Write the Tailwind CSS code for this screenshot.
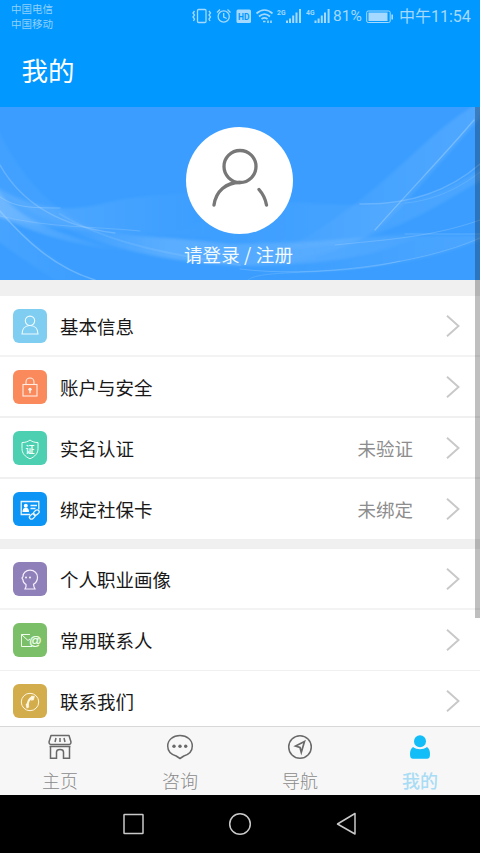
<!DOCTYPE html>
<html lang="zh-CN">
<head>
<meta charset="utf-8">
<title>我的</title>
<script src="https://cdn.jsdelivr.net/npm/@tailwindcss/browser@4"></script>
</head>
<body class="w-[480px] h-[853px] overflow-hidden bg-black font-['Noto_Sans_CJK_SC','Noto_Sans',sans-serif]">
<div class="relative flex flex-col w-[480px] h-[853px] overflow-hidden">
  <header class="h-[107px] shrink-0 bg-[#0198ff]">
    <div class="flex justify-between h-[33px] text-[#a5d9ff]">
      <div class="pl-[11px] pt-[2px] text-[10.5px] leading-[14.5px] text-[#8fd0ff]"><div>中国电信</div><div>中国移动</div></div>
      <div class="flex items-center h-[33px] pr-[10px]">
        <svg class="shrink-0 w-[142px] h-[33px]" viewBox="190 0 142 33" fill="none" stroke="#a5d9ff" stroke-width="1.3">
          <rect x="197.500" y="9.500" width="8.500" height="13" rx="1"/>
          <path d="M194.500 11l-1.500 2 1.500 2-1.500 2 1.500 2-1 2M209 11l1.500 2-1.500 2 1.500 2-1.500 2 1 2"/>
          <circle cx="223.700" cy="16.500" r="5.600"/><path d="M223.700 13v4l3 1.500M217 12.500l3-3M227.500 9.500l3 3"/>
          <rect x="236.500" y="9.500" width="14.500" height="13.500" rx="1.500" fill="#a5d9ff" stroke="none"/>
          <text x="238" y="20" font-size="9.500" font-weight="700" font-family="Roboto, sans-serif" textLength="11.500" lengthAdjust="spacingAndGlyphs" fill="#0198ff" stroke="none">HD</text>
          <path d="M256.500 13.500c5-4.500 11-4.500 16 0M259 16.500c3.500-3 7.500-3 11 0M261.500 19c2-1.600 4-1.600 6 0" stroke-width="1.700"/>
          <path d="M263 21.500h2.500M268 20.500v2.500M271 20.500v2.500" stroke-width="1.600"/>
          <g fill="#a5d9ff" stroke="none" font-size="8" font-weight="700" font-family="Roboto, sans-serif"><text x="277" y="15" textLength="8.500" lengthAdjust="spacingAndGlyphs">2G</text><text x="306" y="15" textLength="8.500" lengthAdjust="spacingAndGlyphs">4G</text></g>
          <path d="M287 20.500v2.500M290 18.500v4.500M293.200 15.500v7.500M296.500 12.500v10.500M300 9v14M315.500 20.500v2.500M318.600 18.500v4.500M321.800 15.500v7.500M325 12.500v10.500M328.600 9v14" stroke-width="2"/>
        </svg>
        <span class="shrink-0 w-[34px] pl-[1px] text-[15.500px] leading-[33px] font-[Roboto,sans-serif]">81%</span>
        <svg class="shrink-0 w-[28px] h-[14px]" viewBox="0 0 28 14" fill="none" stroke="#a5d9ff"><rect x=".7" y="1" width="23.500" height="11.500" rx="1.500"/><rect x="2.500" y="2.500" width="19" height="8.500" fill="#a5d9ff" stroke="none"/><path d="M26.200 4.500v5" stroke-width="1.600"/></svg>
        <span class="shrink-0 w-[76px] pl-[5px] text-[16px] leading-[33px] whitespace-nowrap font-[Roboto,'Noto_Sans_CJK_SC',sans-serif]">中午11:54</span>
      </div>
    </div>
    <h1 class="pl-[21.5px] pt-[18px] text-[26.5px] leading-[38px] text-white">我的</h1>
  </header>

  <section class="relative h-[173px] shrink-0 bg-[#3a9dff]">
    <svg class="absolute inset-0 w-[480px] h-[173px]" viewBox="0 107 480 173" fill="none">
      <defs>
        <linearGradient id="l" x1="0" x2="1"><stop stop-color="#a8d5ff" stop-opacity=".34"/><stop offset="1" stop-color="#a8d5ff" stop-opacity="0"/></linearGradient>
        <linearGradient id="r" x1="1" x2="0"><stop stop-color="#a8d5ff" stop-opacity=".2"/><stop offset="1" stop-color="#a8d5ff" stop-opacity="0"/></linearGradient>
        <linearGradient id="m" x1="0" x2="1"><stop stop-color="#a8d5ff" stop-opacity=".02"/><stop offset=".3" stop-color="#a8d5ff" stop-opacity=".3"/><stop offset=".6" stop-color="#a8d5ff" stop-opacity=".22"/><stop offset="1" stop-color="#a8d5ff" stop-opacity=".02"/></linearGradient>
        <filter id="soft" x="-10%" y="-20%" width="120%" height="140%"><feGaussianBlur stdDeviation="1.600"/></filter>
      </defs>
      <g filter="url(#soft)">
        <path d="M-5 122C20 180 60 220 110 234C70 230 25 215-5 187Z" fill="#a8d5ff" fill-opacity=".07"/>
        <path d="M-5 186C38 213 75 211 105 203C140 194 180 193 220 193V236C110 236 40 228-5 216Z" fill="url(#l)" fill-opacity=".65"/>
        <path d="M-5 186C20 224 65 236 130 252C70 246 20 228-5 214Z" fill="url(#l)"/>
        <path d="M-5 208C25 237 60 270 105 282H60C35 270 10 248-5 240Z" fill="url(#l)" fill-opacity=".35"/>
        <path d="M60 226C110 235 160 236 230 244C310 243 360 238 430 230C380 256 340 264 240 266C170 262 110 250 60 226Z" fill="url(#m)"/>
        <path d="M485 100C420 130 370 220 250 262C350 262 385 226 405 203L478 120Z" fill="url(#r)"/>
        <path d="M485 165C430 205 380 208 310 203C270 200 210 215 160 240L300 248C380 245 430 210 485 178Z" fill="url(#r)" fill-opacity=".8"/>
        <path d="M485 236C390 234 320 240 260 250L240 275C340 275 430 264 485 237Z" fill="url(#r)" fill-opacity=".8"/>
      </g>
      <g stroke="#b5dbff" stroke-linecap="round">
        <path d="M0 165C22 204 60 226 115 233" stroke-opacity=".3" stroke-width="1.500"/>
        <path d="M0 197C15 207 28 208 60 208" stroke-opacity=".35"/>
        <path d="M0 211C25 240 55 268 95 280" stroke-opacity=".36" stroke-width="1.500"/>
        <path d="M0 216C50 228 90 226 140 231" stroke-opacity=".25"/>
        <path d="M60 214C110 245 180 256 240 265" stroke-opacity=".15" stroke-width="2"/>
        <path d="M474 120C440 160 410 190 375 230" stroke-opacity=".4" stroke-width="1.200"/>
        <path d="M480 164C450 190 410 205 360 204" stroke-opacity=".3" stroke-width="1.500"/>
        <path d="M480 172C450 196 420 202 405 203" stroke-opacity=".2"/>
        <path d="M480 220C430 238 380 240 335 245M480 234H405M480 238C420 265 310 278 240 269" stroke-opacity=".28"/>
        <path d="M248 280C260 268 340 277 400 261" stroke-opacity=".2"/>
      </g>
    </svg>
    <div class="relative flex flex-col items-center pt-[20px] pr-[1px]">
      <div class="flex justify-center w-[107px] h-[107px] rounded-full bg-white">
        <svg class="w-[107px] h-[107px]" viewBox="186 127 107 107" fill="none" stroke="#777" stroke-width="3.300" stroke-linecap="round"><circle cx="240" cy="166.500" r="16"/><path d="M214 205C216 191 226 182.500 240 182.500M259 189.500C263 194 265.500 199 266.500 205"/></svg>
      </div>
      <div class="mt-[7px] pr-[2px] text-[18.5px] leading-[27px] text-[#f2faff] whitespace-nowrap tracking-[.15px]">请登录 / 注册</div>
    </div>
  </section>

  <main class="h-[446px] shrink-0 overflow-hidden bg-[#f0f0f0] pt-[16px] text-[18.5px] text-[#181818]">
    <div class="flex flex-col">
      <div class="flex items-center h-[61px] bg-white border-b-2 border-[#f3f3f3] pl-[13px] pr-[20px]">
        <svg class="w-[34px] h-[34px]" viewBox="0 0 34 34" fill="none" stroke="#eefaff" stroke-width="1.100"><rect width="34" height="34" rx="6" fill="#7fcdf1" stroke="none"/><circle cx="17" cy="11.800" r="4.700"/><path d="M9 25c0-5 3-8.500 8-8.500s8 3.500 8 8.500z"/></svg>
        <span class="ml-[13px] pt-[2px] grow">基本信息</span>
        <svg class="w-[14px] h-[22px]" viewBox="0 0 14 22" fill="none" stroke="#c8c8c8" stroke-width="1.900"><path d="M1 .8L12.500 11 1 21.200"/></svg>
      </div>
      <div class="flex items-center h-[61px] bg-white border-b-2 border-[#f0f0f0] pl-[13px] pr-[20px]">
        <svg class="w-[34px] h-[34px]" viewBox="0 0 34 34" fill="none" stroke="#ffece2" stroke-width="1.100"><rect width="34" height="34" rx="6" fill="#fa8a5c" stroke="none"/><rect x="10" y="14.500" width="14" height="11.500"/><path d="M13 14.500V12a4 4 0 0 1 8 0v2.500"/><circle cx="17" cy="19.300" r="1.600" fill="#fff" stroke="none"/><path d="M17 19v4.300" stroke-width="1.500"/></svg>
        <span class="ml-[13px] pt-[2px] grow">账户与安全</span>
        <svg class="w-[14px] h-[22px]" viewBox="0 0 14 22" fill="none" stroke="#c8c8c8" stroke-width="1.900"><path d="M1 .8L12.500 11 1 21.200"/></svg>
      </div>
      <div class="flex items-center h-[61px] bg-white border-b-2 border-[#f0f0f0] pl-[13px] pr-[20px]">
        <svg class="w-[34px] h-[34px]" viewBox="0 0 34 34" fill="none" stroke="#e9fff8" stroke-width="1"><rect width="34" height="34" rx="6" fill="#4dd0b1" stroke="none"/><path d="M17 9c-2.500 2-5 2.500-8 2.500v6c0 5 3 8 8 10.300 5-2.300 8-5.300 8-10.300v-6c-3 0-5.500-.5-8-2.500z"/><text x="12.500" y="21.500" font-size="9" font-weight="700" fill="#f2fffb" stroke="none">证</text></svg>
        <span class="ml-[13px] pt-[2px] grow">实名认证</span>
        <span class="mr-[33px] pt-[2px] text-[#8d8d8d]">未验证</span>
        <svg class="w-[14px] h-[22px]" viewBox="0 0 14 22" fill="none" stroke="#c8c8c8" stroke-width="1.900"><path d="M1 .8L12.500 11 1 21.200"/></svg>
      </div>
      <div class="flex items-center h-[61px] bg-white border-b border-[#f0f0f0] pl-[13px] pr-[20px]">
        <svg class="w-[34px] h-[34px]" viewBox="0 0 34 34" fill="none" stroke="#eaf6ff" stroke-width="1.300"><rect width="34" height="34" rx="6" fill="#0c95f5" stroke="none"/><path d="M17 22.500H8.200V9.500h17.600v8"/><circle cx="12.800" cy="13.700" r="2" fill="#fff" stroke="none"/><path d="M9.500 20c0-3 1.300-4.300 3.300-4.300s3.200 1.300 3.200 4.300z" fill="#fff" stroke="none"/><path d="M17.500 13.500h6.500M17.500 16.500h5"/><rect x="-2" y="-3.300" width="4" height="6.300" rx="2" transform="translate(23.200 20.700) rotate(48)"/><rect x="-2" y="-3.300" width="4" height="6.300" rx="2" transform="translate(19.200 24.500) rotate(48)"/></svg>
        <span class="ml-[13px] pt-[2px] grow">绑定社保卡</span>
        <span class="mr-[33px] pt-[2px] text-[#8d8d8d]">未绑定</span>
        <svg class="w-[14px] h-[22px]" viewBox="0 0 14 22" fill="none" stroke="#c8c8c8" stroke-width="1.900"><path d="M1 .8L12.500 11 1 21.200"/></svg>
      </div>
    </div>
    <div class="flex flex-col mt-[9px]">
      <div class="flex items-center h-[61px] bg-white border-b-2 border-[#f3f3f3] pl-[13px] pr-[20px]">
        <svg class="w-[34px] h-[34px]" viewBox="0 0 34 34" fill="none" stroke="#f5efff" stroke-width="1.200"><rect width="34" height="34" rx="6" fill="#8f80b9" stroke="none"/><path d="M13 22.500c-2.200-1.300-3-3-3-4.500L9 16l1-1.500c0-3.500 3-6.300 7-6.300 4.500 0 7.500 3 7.500 7 0 3-1.500 5.600-4 7l.5 2.500 1 2.300H12l1-2.300z"/><circle cx="13" cy="15.500" r=".9" fill="#fff" stroke="none"/><circle cx="17" cy="15.500" r=".9" fill="#fff" stroke="none"/></svg>
        <span class="ml-[13px] pt-[2px] grow">个人职业画像</span>
        <svg class="w-[14px] h-[22px]" viewBox="0 0 14 22" fill="none" stroke="#c8c8c8" stroke-width="1.900"><path d="M1 .8L12.500 11 1 21.200"/></svg>
      </div>
      <div class="flex items-center h-[61px] bg-white border-b border-[#f0f0f0] pl-[13px] pr-[20px]">
        <svg class="w-[34px] h-[34px]" viewBox="0 0 34 34" fill="none" stroke="#f0ffec" stroke-width="1"><rect width="34" height="34" rx="6" fill="#7cbf69" stroke="none"/><path d="M17 11.500H8.500v12H19M8.500 11.500l6.500 6 2-1.500"/><text x="16" y="22" font-size="12.500" font-family="Liberation Sans, sans-serif" fill="#f0ffec" stroke="#f0ffec" stroke-width=".25">@</text></svg>
        <span class="ml-[13px] pt-[2px] grow">常用联系人</span>
        <svg class="w-[14px] h-[22px]" viewBox="0 0 14 22" fill="none" stroke="#c8c8c8" stroke-width="1.900"><path d="M1 .8L12.500 11 1 21.200"/></svg>
      </div>
      <div class="flex items-center h-[61px] bg-white pl-[13px] pr-[20px]">
        <svg class="w-[34px] h-[34px] mb-[1px]" viewBox="0 0 34 34" fill="none" stroke="#fff7e3"><rect width="34" height="34" rx="6" fill="#d3ac4b" stroke="none"/><circle cx="17" cy="18" r="8.700"/><path d="M19.500 13c-3.500 1.800-5 5.500-5 9.500" stroke-width="2"/><path d="M18.500 12l3 .3-1 3.700-2.300.3zM13 20l2.300-.3.500 3.500-2 1z" fill="#fff7e3" stroke-width=".5"/></svg>
        <span class="ml-[13px] pt-[1px] grow">联系我们</span>
        <svg class="w-[14px] h-[22px] mb-[2px]" viewBox="0 0 14 22" fill="none" stroke="#c8c8c8" stroke-width="1.900"><path d="M1 .8L12.500 11 1 21.200"/></svg>
      </div>
    </div>
  </main>

  <nav class="grid grid-cols-4 h-[69px] shrink-0 bg-[#f7f7f7] border-t border-[#d8d8d8] text-[18px] leading-[24px] text-[#8a8a8a] font-light">
    <div class="flex flex-col items-center pt-[7px]">
      <svg class="w-[28px] h-[28px] mb-[6px]" viewBox="46 734 28 28" fill="none" stroke="#696969" stroke-width="1.500"><path d="M51 735.500h18l2 6.500c0 3-2.500 2.500-2.500 2.500h-17s-2.500.5-2.500-2.500z" stroke-linejoin="round"/><path d="M56 738l-1 4M60 738v4M64 738l1 4M49.500 746.500h21M50.500 747v11.300h6V752c0-3.500 7-3.500 7 0v6.300h6V747"/></svg>
      <span>主页</span>
    </div>
    <div class="flex flex-col items-center pt-[7px]">
      <svg class="w-[28px] h-[28px] mb-[6px]" viewBox="166 734 28 28" fill="none" stroke="#696969" stroke-width="1.500"><path d="M180 735.500c7 0 12.300 4.500 12.300 10.500 0 5.500-3.500 8.500-8.500 10L180 758.500l-3.800-2.500c-5-1.500-8.500-4.500-8.500-10 0-6 5.300-10.500 12.300-10.500z" stroke-linejoin="round"/><g fill="#696969" stroke="none"><circle cx="174" cy="746.300" r="1.700"/><circle cx="180" cy="746.300" r="1.700"/><circle cx="185.700" cy="746.300" r="1.700"/></g></svg>
      <span>咨询</span>
    </div>
    <div class="flex flex-col items-center pt-[7px]">
      <svg class="w-[28px] h-[28px] mb-[6px]" viewBox="286 734 28 28" fill="none" stroke="#696969" stroke-width="1.500"><circle cx="300" cy="747" r="11.300"/><path d="M304.500 741.500l-9 4.500 4.500 1.500 1.300 4.800z" stroke-width="1.700"/></svg>
      <span>导航</span>
    </div>
    <div class="flex flex-col items-center pt-[7px]">
      <svg class="w-[28px] h-[28px] mb-[6px]" viewBox="406 734 28 28" fill="#13bdf7"><circle cx="420" cy="741.200" r="6"/><path d="M413 747c4 3 10 3 14 0 2 1.300 3 4 3 7 0 3.500-1 4.700-3 4.700h-14c-2 0-3-1.200-3-4.700 0-3 1-5.700 3-7z"/></svg>
      <span class="text-[#a9dcf5] font-medium">我的</span>
    </div>
  </nav>

  <footer class="flex justify-center h-[58px] shrink-0 bg-black">
    <svg class="w-[240px] h-[58px]" viewBox="120 795 240 58" fill="none" stroke="#c9c9c9" stroke-width="1.500" stroke-linejoin="round"><rect x="124" y="814.500" width="19" height="19" rx=".5"/><circle cx="240" cy="824" r="10.300"/><path d="M337.500 824l17.500-10.500v20.500z"/></svg>
  </footer>
  <div class="absolute right-0 top-[107px] w-[5px] h-[511px] bg-black/25"></div>
</div>
</body>
</html>
